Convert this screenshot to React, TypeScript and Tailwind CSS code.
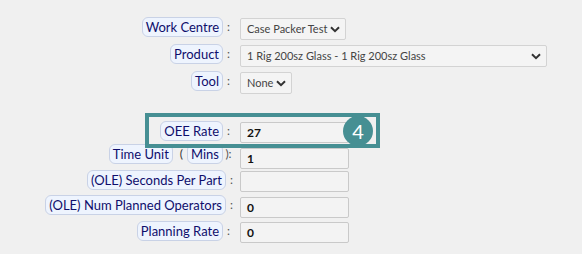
import React from 'react'

const FONT = { fontFamily: 'Lato, "Open Sans", sans-serif' }

function Pill({ children }: { children: React.ReactNode }) {
  return (
    <span className="inline-flex items-center h-[20px] px-[3px] rounded-[6px] border border-[#c9d2e6] bg-[#eef4fe] text-[13px] leading-none text-[#0e0e6c] whitespace-nowrap">
      {children}
    </span>
  )
}

function Chevron() {
  return (
    <svg width="10" height="7" viewBox="0 0 10 7" className="shrink-0">
      <path d="M1 1.2 5 5.2 9 1.2" fill="none" stroke="#333" strokeWidth="2" />
    </svg>
  )
}

function Select({ value, w }: { value: string; w: string }) {
  return (
    <div className={`${w} h-[22px] flex items-center justify-between overflow-hidden pl-[6px] pr-[5px] bg-[#f4f4f4] border border-[#d3d3d3] rounded-[2px] text-[11px] text-[#444]`}>
      <span className="whitespace-nowrap">{value}</span>
      <Chevron />
    </div>
  )
}

function Input({ value }: { value: string }) {
  return (
    <div className="w-[109px] h-[21px] flex items-center pl-[6px] bg-[#f3f3f3] border border-[#c9c9c9] rounded-[2px] text-[12px] font-bold text-[#111]">
      {value}
    </div>
  )
}

function Row({
  label,
  children,
  colon = ':',
  h,
  wide = false,
}: {
  label: React.ReactNode
  children: React.ReactNode
  colon?: string
  h: string
  wide?: boolean
}) {
  return (
    <div className={`flex items-start ${h}`}>
      <div className={`${wide ? 'w-[237px]' : 'w-[234px]'} flex items-center justify-end`}>
        {label}
        <span className="w-[11px] text-center text-[12px] text-[#555] leading-none">{colon}</span>
      </div>
      <div className={`${wide ? 'ml-[3px]' : 'ml-[6px]'} mt-[1px]`}>{children}</div>
    </div>
  )
}

export default function App() {
  return (
    <div className="relative w-[582px] h-[254px] bg-[#f0f0f0] pt-[17px]" style={FONT}>
      <Row h="h-[27px]" label={<Pill>Work Centre</Pill>}>
        <Select value="Case Packer Test" w="w-[106px]" />
      </Row>
      <Row h="h-[27px]" label={<Pill>Product</Pill>}>
        <Select value="1 Rig 200sz Glass - 1 Rig 200sz Glass" w="w-[307px]" />
      </Row>
      <Row h="h-[27px]" label={<Pill>Tool</Pill>}>
        <Select value="None" w="w-[52px]" />
      </Row>

      <div className="mt-[23px]">
        <Row h="h-[23px]" label={<Pill>OEE Rate</Pill>}>
          <Input value="27" />
        </Row>
        <Row
          h="h-[26px]"
          colon="):"
          label={
            <span className="flex items-center">
              <Pill>Time Unit</Pill>
              <span className="ml-[7px] mr-[4px] text-[12px] text-[#333]">(</span>
              <Pill>Mins</Pill>
            </span>
          }
        >
          <div className="mt-[3px]"><Input value="1" /></div>
        </Row>
        <Row wide h="h-[25px]" label={<Pill>(OLE) Seconds Per Part</Pill>}>
          <Input value="" />
        </Row>
        <Row wide h="h-[26px]" label={<Pill>(OLE) Num Planned Operators</Pill>}>
          <div className="mt-[1px]"><Input value="0" /></div>
        </Row>
        <Row h="h-[25px]" label={<Pill>Planning Rate</Pill>}>
          <Input value="0" />
        </Row>
      </div>

      {/* highlight overlay */}
      <div className="absolute left-[145px] top-[113px] w-[235px] h-[35px] border-[4px] border-[#468f93]" />
      <div className="absolute left-[343px] top-[116px] w-[30px] h-[30px] rounded-full bg-[#468f93] flex items-center justify-center text-white text-[20px] leading-none">
        4
      </div>
    </div>
  )
}
